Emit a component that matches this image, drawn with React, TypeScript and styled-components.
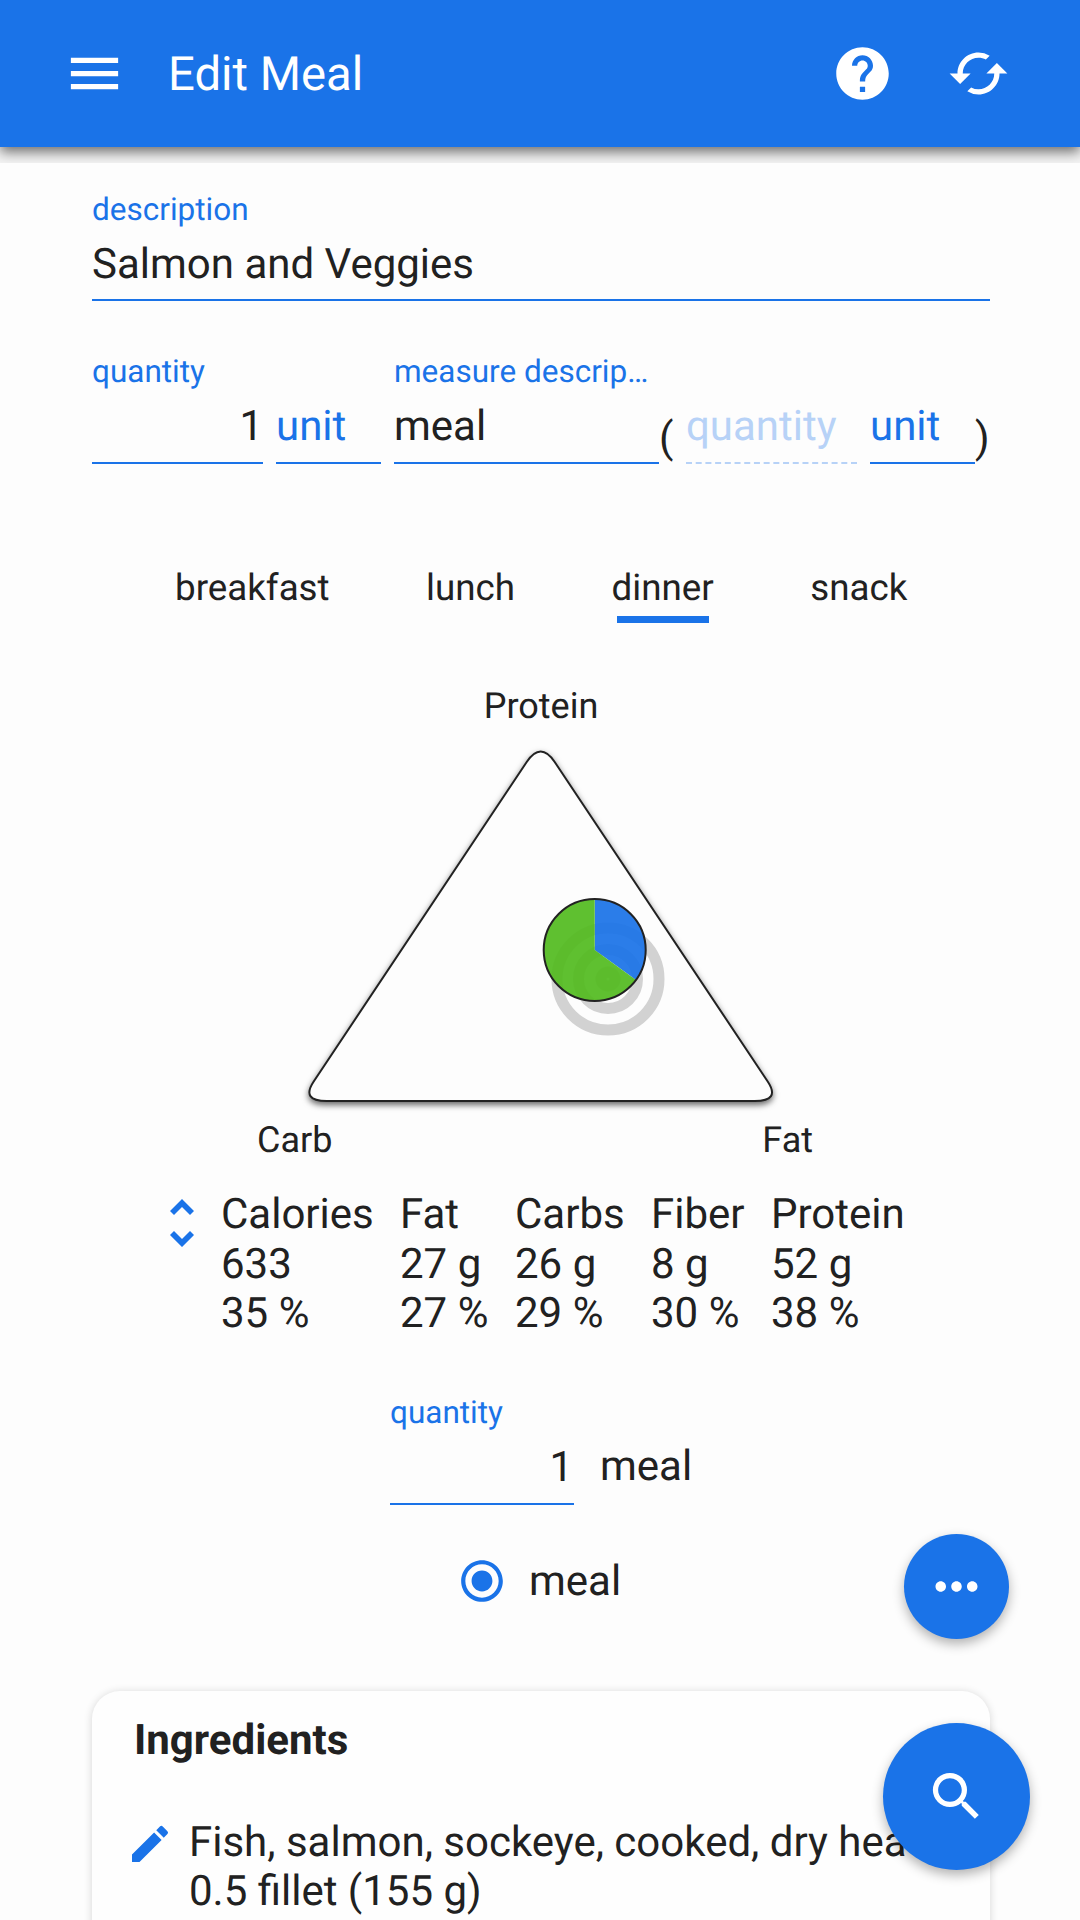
import React from "react";
import styled, { createGlobalStyle } from "styled-components";
import { MdMenu, MdHelp, MdCached, MdRadioButtonChecked, MdMoreHoriz, MdSearch, MdEdit } from "react-icons/md";

const blue = "#1a73e8";
const ink = "#212121";

const Global = createGlobalStyle`
  html, body { margin: 0; padding: 0; width: 1080px; height: 1920px; overflow: hidden; background: #f4f4f4; }
  body { font-family: Roboto, "Liberation Sans", sans-serif; color: ${ink}; text-rendering: geometricPrecision; }
`;

const Page = styled.div`
  width: 1080px;
  height: 1920px;
  position: relative;
  overflow: hidden;
`;

const AppBar = styled.header`
  height: 147px;
  background: ${blue};
  color: #fff;
  display: flex;
  align-items: center;
  padding: 0 70px 0 63px;
  box-shadow: 0 5px 12px rgba(0, 0, 0, 0.55);
  font-size: 0;
`;

const Title = styled.h1`
  flex: 1;
  margin: 0 0 0 42px;
  font-size: 47.25px;
  font-weight: 400;
  line-height: 52px;
`;

const BarIcon = styled.span`
  width: 63px;
  height: 63px;
  display: block;
  & + & { margin-left: 53px; }
`;

const Main = styled.main`
  position: relative;
  margin-top: 16px;
  height: 1757px;
  padding: 29px 90px 0 92px;
  background: #fdfdfd;
`;

const Field = styled.div<{ $w?: number; $dashed?: boolean; $right?: boolean; $pb?: number }>`
  width: ${(p) => (p.$w ? `${p.$w}px` : "auto")};
  flex: none;
  padding-bottom: ${(p) => p.$pb ?? 10}px;
  border-bottom: 2px ${(p) => (p.$dashed ? "dashed #b7d2f7" : `solid ${blue}`)};
  text-align: ${(p) => (p.$right ? "right" : "left")};
`;

const FieldLabel = styled.label`
  display: block;
  height: 36px;
  font-size: 31.5px;
  line-height: 36px;
  color: ${blue};
  white-space: nowrap;
  margin-bottom: 12px;
  text-align: left;
`;

const Value = styled.div<{ $tone?: "ink" | "blue" | "faint"; $pad?: number }>`
  height: 50px;
  font-size: 42px;
  line-height: 50px;
  padding-right: ${(p) => p.$pad ?? 0}px;
  color: ${(p) => (p.$tone === "blue" ? blue : p.$tone === "faint" ? "#b7d2f7" : ink)};
`;

const MeasureRow = styled.div`
  display: flex;
  align-items: flex-end;
  margin-top: 53px;
`;

const Spaced = styled.div`
  width: 13px;
  flex: none;
`;

const Paren = styled.span`
  flex: none;
  width: 27px;
  font-size: 42px;
  line-height: 50px;
  box-sizing: border-box;
`;

const CloseParen = styled(Paren)`
  width: 15px;
`;

const Tabs = styled.nav`
  display: flex;
  gap: 96.5px;
  margin: 102px 0 0 83px;
`;

const Tab = styled.div<{ $active?: boolean }>`
  font-size: 36.75px;
  line-height: 44px;
  padding-bottom: 13px;
  position: relative;
  ${(p) =>
    p.$active &&
    `&::after { content: ""; position: absolute; left: 5px; right: 5px; bottom: 0; height: 7px; background: ${blue}; }`}
`;

const ChartTop = styled.div`
  font-size: 36px;
  line-height: 44px;
  text-align: center;
  margin-top: 61px;
`;

const TriangleSvg = styled.svg`
  display: block;
  margin: 0 auto;
  overflow: visible;
  .tri { filter: drop-shadow(0 3px 3px rgba(0, 0, 0, 0.6)); }
`;

const ChartBottom = styled.div`
  display: flex;
  justify-content: space-between;
  width: 556px;
  margin-left: 165px;
  font-size: 36px;
  line-height: 44px;
`;

const Nutrients = styled.div`
  display: flex;
  margin: 28px 0 0 78px;
`;

const SortIcons = styled.div`
  width: 51px;
  display: flex;
  flex-direction: column;
  gap: 16px;
  padding-top: 9px;
  color: ${blue};
`;

const ChevronSvg = styled.svg<{ $down?: boolean }>`
  display: block;
  transform: ${(p) => (p.$down ? "rotate(180deg)" : "none")};
`;

const NutrientGrid = styled.div`
  display: grid;
  grid-template-columns: 179px 115px 136px 120px auto;
  font-size: 42px;
  line-height: 49.5px;
  white-space: nowrap;
`;

const ServingRow = styled.div`
  display: flex;
  align-items: flex-end;
  margin: 56px 0 0 298px;
`;

const ServingUnit = styled.span`
  margin: 0 0 13px 26px;
  font-size: 42px;
  line-height: 50px;
`;

const RadioRow = styled.div`
  display: flex;
  align-items: center;
  height: 63px;
  margin: 45px 0 0 365px;
  gap: 22px;
  font-size: 42px;
  color: ${ink};
`;

const RadioIcon = styled(MdRadioButtonChecked)`
  color: ${blue};
  display: block;
`;

const Card = styled.section`
  margin-top: 78px;
  height: 400px;
  border-radius: 28px;
  background: #fefefe;
  padding: 25px 42px;
  box-shadow: 0 1px 8px rgba(0, 0, 0, 0.16);
`;

const CardTitle = styled.h2`
  margin: 0;
  font-size: 42px;
  font-weight: 700;
  line-height: 50px;
`;

const Ingredient = styled.div`
  display: flex;
  margin-top: 52px;
  font-size: 42px;
  line-height: 49.5px;
  white-space: nowrap;
`;

const EditIcon = styled(MdEdit)`
  color: ${blue};
  flex: none;
  margin: 2px 15px 0 -8px;
`;

const Fab = styled.button<{ $size: number; $top: number; $left: number }>`
  position: absolute;
  left: ${(p) => p.$left}px;
  top: ${(p) => p.$top}px;
  width: ${(p) => p.$size}px;
  height: ${(p) => p.$size}px;
  border: 0;
  padding: 0;
  border-radius: 50%;
  background: ${blue};
  color: #fff;
  display: flex;
  align-items: center;
  justify-content: center;
  box-shadow: 0 5px 12px rgba(0, 0, 0, 0.3);
`;

const Chevron = ({ down }: { down?: boolean }) => (
  <ChevronSvg $down={down} width="24" height="16" viewBox="6 8 12 8" fill="currentColor">
    <path d="M12 8l-6 6 2 2 4-4 4 4 2-2z" />
  </ChevronSvg>
);

const nutrientRows = [
  ["Calories", "Fat", "Carbs", "Fiber", "Protein"],
  ["633", "27 g", "26 g", "8 g", "52 g"],
  ["35 %", "27 %", "29 %", "30 %", "38 %"],
];

export default function App() {
  return (
    <Page>
      <Global />
      <AppBar>
        <BarIcon><MdMenu size={63} /></BarIcon>
        <Title>Edit Meal</Title>
        <BarIcon><MdHelp size={63} /></BarIcon>
        <BarIcon><MdCached size={63} /></BarIcon>
      </AppBar>
      <Main>
        <Field $pb={9}>
          <FieldLabel>description</FieldLabel>
          <Value>Salmon and Veggies</Value>
        </Field>

        <MeasureRow>
          <Field $w={171} $right>
            <FieldLabel>quantity</FieldLabel>
            <Value>1</Value>
          </Field>
          <Spaced />
          <Field $w={105}>
            <Value $tone="blue">unit</Value>
          </Field>
          <Spaced />
          <Field $w={265}>
            <FieldLabel>measure descrip…</FieldLabel>
            <Value>meal</Value>
          </Field>
          <Paren>(</Paren>
          <Field $w={171} $dashed>
            <Value $tone="faint">quantity</Value>
          </Field>
          <Spaced />
          <Field $w={105}>
            <Value $tone="blue">unit</Value>
          </Field>
          <CloseParen>)</CloseParen>
        </MeasureRow>

        <Tabs>
          <Tab>breakfast</Tab>
          <Tab>lunch</Tab>
          <Tab $active>dinner</Tab>
          <Tab>snack</Tab>
        </Tabs>

        <ChartTop>Protein</ChartTop>
        <TriangleSvg width="500" height="390" viewBox="0 0 500 390">
          <path
            className="tri"
            d="M235.7 34 Q249.7 13 263.7 34 L476.7 353.5 Q489.7 373 463.7 373 L35.7 373 Q9.7 373 22.7 353.5 Z"
            fill="#fdfdfd"
            stroke="#222"
            strokeWidth="2"
          />
          <g fill="none" stroke="#d2d2d2" strokeWidth="11">
            <circle cx="317" cy="251" r="51" />
            <circle cx="317" cy="251" r="29.5" />
            <circle cx="317" cy="251" r="7" />
          </g>
          <g opacity="0.92">
            <path d="M303.7 222 L303.7 171 A51 51 0 0 1 345 252 Z" fill="#1a73e8" />
            <path d="M303.7 222 L345 252 A51 51 0 1 1 303.7 171 Z" fill="#52bb1f" />
          </g>
          <circle cx="303.7" cy="222" r="51" fill="none" stroke="#222" strokeWidth="2" />
        </TriangleSvg>
        <ChartBottom>
          <span>Carb</span>
          <span>Fat</span>
        </ChartBottom>

        <Nutrients>
          <SortIcons>
            <Chevron />
            <Chevron down />
          </SortIcons>
          <NutrientGrid>
            {nutrientRows.flat().map((c, i) => (
              <div key={i}>{c}</div>
            ))}
          </NutrientGrid>
        </Nutrients>

        <ServingRow>
          <Field $w={184} $right>
            <FieldLabel>quantity</FieldLabel>
            <Value $pad={1}>1</Value>
          </Field>
          <ServingUnit>meal</ServingUnit>
        </ServingRow>

        <RadioRow>
          <RadioIcon size={50} />
          <span>meal</span>
        </RadioRow>

        <Card>
          <CardTitle>Ingredients</CardTitle>
          <Ingredient>
            <EditIcon size={48} />
            <div>
              Fish, salmon, sockeye, cooked, dry hea
              <br />
              0.5 fillet (155 g)
            </div>
          </Ingredient>
        </Card>
      </Main>
      <Fab $size={105} $left={904} $top={1534}><MdMoreHoriz size={63} /></Fab>
      <Fab $size={147} $left={883} $top={1723}><MdSearch size={63} /></Fab>
    </Page>
  );
}
